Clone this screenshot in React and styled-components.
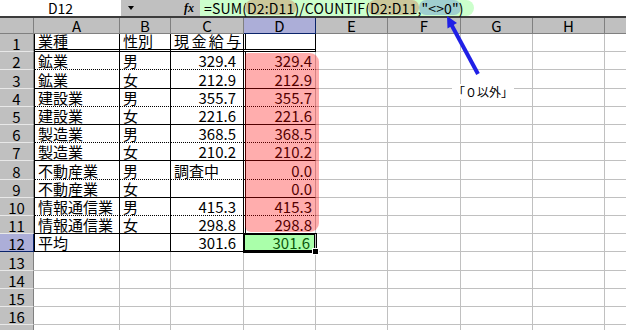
import React from 'react';
import styled, { createGlobalStyle, css } from 'styled-components';

const GlobalStyle = createGlobalStyle`
  html, body { margin: 0; padding: 0; background: #fff; }
  body { font-family: "Noto Sans CJK JP", "Liberation Sans", sans-serif; color: #000; }
`;

const COLS = [34, 86, 51, 73, 72, 72, 73, 72, 72, 72];
const ROWS = [18, 18, 19, 18, 18, 18, 18, 19, 18, 18, 18, 18, 19, 18, 18, 18, 18];
const LETTERS = ['A', 'B', 'C', 'D', 'E', 'F', 'G', 'H', 'I'];

const DATA = [
  ['業種', '性別', '現金給与', ''],
  ['鉱業', '男', '329.4', '329.4'],
  ['鉱業', '女', '212.9', '212.9'],
  ['建設業', '男', '355.7', '355.7'],
  ['建設業', '女', '221.6', '221.6'],
  ['製造業', '男', '368.5', '368.5'],
  ['製造業', '女', '210.2', '210.2'],
  ['不動産業', '男', '調査中', '0.0'],
  ['不動産業', '女', '', '0.0'],
  ['情報通信業', '男', '415.3', '415.3'],
  ['情報通信業', '女', '298.8', '298.8'],
  ['平均', '', '301.6', '301.6'],
];

const Window = styled.div`
  position: relative;
  width: 626px;
  height: 330px;
  overflow: hidden;
  background: #fff;
`;

const FormulaBar = styled.div`
  display: flex;
  height: 16px;
  border-bottom: 2px solid #3c3c3c;
  font-size: 14px;
  line-height: 16px;
`;

const NameBox = styled.div`
  width: 121px;
  text-align: center;
  background: #fff;
`;

const BarTools = styled.div`
  width: 79px;
  display: flex;
  align-items: center;
  background: #c0c0c0;
`;

const DropArrow = styled.span`
  margin-left: 7px;
  border-left: 3.5px solid transparent;
  border-right: 3.5px solid transparent;
  border-top: 4px solid #000;
`;

const Fx = styled.span`
  margin-left: auto;
  margin-right: 6px;
  font-family: "Liberation Serif", serif;
  font-style: italic;
  font-weight: bold;
  font-size: 12px;
`;

const FormulaField = styled.div`
  flex: 1;
  background: #fff;
`;

const FormulaMark = styled.span`
  display: inline-block;
  height: 16px;
  padding: 0 10px 0 4px;
  background: #ccffcc;
  border-radius: 0 8px 8px 0;
  letter-spacing: 0.15px;
  white-space: pre;
`;

const Ref = styled.span`
  display: inline-block;
  padding: 0 2px;
  margin: 0 -2px;
  height: 15px;
  border-radius: 7px;
  background: ${p => (p.$tone === 'teal' ? '#9fcfcf' : '#cbc79a')};
`;

const Sheet = styled.div`
  position: relative;
  display: grid;
  grid-template-columns: ${COLS.map(w => `${w}px`).join(' ')};
  grid-template-rows: 16px ${ROWS.map(h => `${h}px`).join(' ')};
  font-size: 15px;
`;

const Head = styled.div`
  box-sizing: border-box;
  display: flex;
  align-items: center;
  justify-content: center;
  background: ${p => (p.$active ? '#acaed8' : '#c0c0c0')};
  line-height: 1;
`;

const ColHead = styled(Head)`
  border-right: 1px solid ${p => (p.$active ? '#0a246a' : '#808080')};
  border-bottom: 1px solid ${p => (p.$active ? '#0a246a' : '#808080')};
`;

const RowHead = styled(Head)`
  padding-top: 2px;
  border-right: 1px solid ${p => (p.$active ? '#0a246a' : '#808080')};
  border-bottom: 1px solid ${p => (p.$active ? '#0a246a' : '#e8e8e8')};
`;

const Cell = styled.div`
  box-sizing: border-box;
  position: relative;
  display: flex;
  align-items: flex-end;
  justify-content: ${p => (p.$right ? 'flex-end' : 'flex-start')};
  padding: 0 ${p => p.$padRight ?? 3}px 0 3px;
  border-right: 1px solid ${p => (p.$edge ? '#000' : '#c0c0c0')};
  border-bottom: ${p => p.$bottom || '1px solid #c0c0c0'};
  border-left: ${p => (p.$leftEdge ? '1px solid #000' : '0')};
  line-height: 16px;
  white-space: nowrap;
  letter-spacing: ${p => (p.$spread ? '2.4px' : '0')};
  ${p => p.$doubleLeft && css`box-shadow: inset 1px 0 0 #fff, inset 2px 0 0 #000;`}
  ${p => p.$selected && css`
    z-index: 2;
    background: #aaffaa;
    color: #0b560b;
    box-shadow: 0 0 0 1px #000, inset 0 0 0 1px #000;
  `}
`;

const FillHandle = styled.span`
  position: absolute;
  right: -3px;
  bottom: -3px;
  width: 5px;
  height: 5px;
  background: #000;
  box-shadow: 0 0 0 1px #fff;
`;

const PinkMark = styled.div`
  position: absolute;
  left: 245px;
  top: 35px;
  width: 74px;
  height: 179px;
  background: rgba(255, 0, 0, 0.32);
  border-radius: 3px 9px 9px 6px;
  z-index: 3;
  pointer-events: none;
`;

const Note = styled.div`
  position: absolute;
  left: 452px;
  top: 84px;
  padding: 0 1px;
  background: #fff;
  font-size: 12px;
  line-height: 15px;
`;

const Arrow = styled.svg`
  position: absolute;
  left: 0;
  top: 0;
  z-index: 5;
`;

function bottomLine(r) {
  if (r === 1) return '3px double #000';
  if (r === 12) return '1px solid #000';
  return r % 2 === 0 ? '1px dotted #000' : '1px solid #000';
}

function BodyRow({ r }) {
  const row = DATA[r - 1];
  const cells = [];
  for (let c = 0; c < 9; c++) {
    const key = `${r}-${c}`;
    if (!row || c > 3) {
      cells.push(<Cell key={key} />);
      continue;
    }
    const text = row[c];
    const numeric = /^[0-9.]+$/.test(text);
    const isD = c === 3;
    const selected = isD && r === 12;
    cells.push(
      <Cell
        key={key}
        $bottom={bottomLine(r)}
        $leftEdge={c === 0}
        $edge={c < 3 || (isD && r === 1)}
        $doubleLeft={isD}
        $right={numeric}
        $padRight={c === 2 ? 7 : selected ? 5 : 3}
        $spread={r === 1 && c === 2}
        $selected={selected}
      >
        {text}
        {selected && <FillHandle />}
      </Cell>
    );
  }
  return (
    <>
      <RowHead $active={r === 12}>{r}</RowHead>
      {cells}
    </>
  );
}

export default function App() {
  return (
    <Window>
      <GlobalStyle />
      <FormulaBar>
        <NameBox>D12</NameBox>
        <BarTools>
          <DropArrow />
          <Fx>fx</Fx>
        </BarTools>
        <FormulaField>
          <FormulaMark>
            =SUM(<Ref>D2:D11</Ref>)/COUNTIF(<Ref>D2:D11</Ref>,<Ref $tone="teal">"&lt;&gt;0"</Ref>)
          </FormulaMark>
        </FormulaField>
      </FormulaBar>
      <Sheet>
        <ColHead />
        {LETTERS.map(l => (
          <ColHead key={l} $active={l === 'D'}>{l}</ColHead>
        ))}
        {ROWS.map((_, i) => (
          <BodyRow key={i} r={i + 1} />
        ))}
        <PinkMark />
      </Sheet>
      <Note>「０以外」</Note>
      <Arrow width="626" height="330" viewBox="0 0 626 330">
        <line x1="478" y1="74" x2="451" y2="24" stroke="#2020e6" strokeWidth="4" />
        <polygon points="447,16 457,23 447.5,28.5" fill="#2020e6" />
      </Arrow>
    </Window>
  );
}
